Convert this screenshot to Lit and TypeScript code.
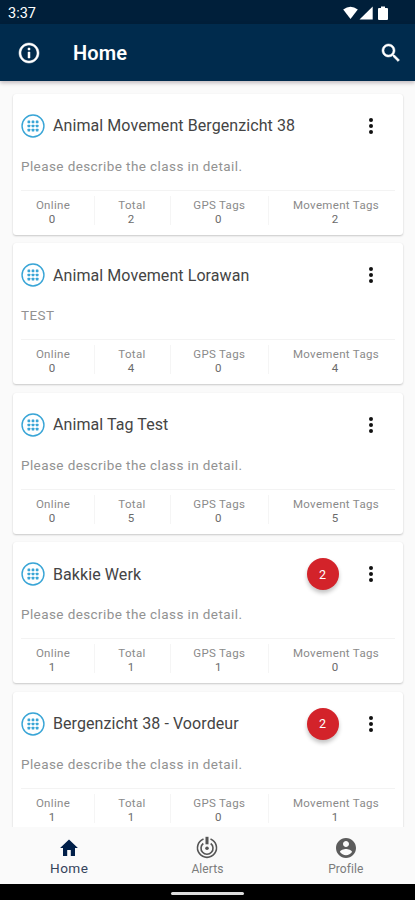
import { LitElement, html, css, svg } from "lit";
import { customElement, property } from "lit/decorators.js";

interface Group {
  name: string;
  description: string;
  stats: number[];
  alerts?: number;
}

const PLACEHOLDER = "Please describe the class in detail.";
const LABELS = ["Online", "Total", "GPS Tags", "Movement Tags"];
const GROUPS: Group[] = [
  { name: "Animal Movement Bergenzicht 38", description: PLACEHOLDER, stats: [0, 2, 0, 2] },
  { name: "Animal Movement Lorawan", description: "TEST", stats: [0, 4, 0, 4] },
  { name: "Animal Tag Test", description: PLACEHOLDER, stats: [0, 5, 0, 5] },
  { name: "Bakkie Werk", description: PLACEHOLDER, stats: [1, 1, 1, 0], alerts: 2 },
  { name: "Bergenzicht 38 - Voordeur", description: PLACEHOLDER, stats: [1, 1, 0, 1], alerts: 2 },
];

@customElement("group-card")
class GroupCard extends LitElement {
  @property({ attribute: false }) group!: Group;

  static styles = css`
    :host {
      display: flex;
      flex-direction: column;
      box-sizing: border-box;
      height: 141px;
      background: #fff;
      border-radius: 3px;
      box-shadow: 0 1px 2px rgba(0, 0, 0, 0.2), 0 0 1px rgba(0, 0, 0, 0.05);
    }
    .head {
      display: flex;
      align-items: center;
      height: 64px;
      padding: 0 20px 0 8px;
    }
    .globe { width: 24px; height: 24px; flex: none; }
    .name {
      flex: 1;
      margin-left: 8.5px;
      font-size: 16px;
      letter-spacing: 0.08px;
      color: #444;
      white-space: nowrap;
    }
    .badge {
      display: flex;
      align-items: center;
      justify-content: center;
      width: 32px;
      height: 32px;
      border-radius: 50%;
      background: #d3232a;
      color: #fff;
      font-size: 12.5px;
      margin-right: 20.5px;
      box-shadow: 0 3px 4px rgba(0, 0, 0, 0.24);
    }
    .more { width: 24px; height: 24px; flex: none; }
    .desc {
      height: 32px;
      padding-left: 8.5px;
      line-height: 17px;
      font-size: 13.5px;
      letter-spacing: 0.41px;
      color: #929292;
    }
    .stats {
      display: grid;
      grid-template-columns: 82px 76px 98.5px 1fr;
      height: 44px;
      text-align: center;
      font-size: 11.5px;
      line-height: 14px;
      color: #8a8a8a;
    }
    .rule { height: 1px; margin: 0 8.5px; background: #f3f3f3; }
    .stat {
      height: 27px;
      margin-top: 5px;
      padding-top: 2px;
      letter-spacing: 0.32px;
      border-right: 1px solid #f5f5f5;
    }
    .stat:last-child { border-right: 0; }
    .value { color: #6a6a6a; letter-spacing: 0; margin-right: 2px; }
  `;

  render() {
    const g = this.group;
    const dots = [8.2, 12.5, 16.8].flatMap((y) =>
      [8.2, 12.5, 16.8].map((x) => svg`<rect x=${x - 1.4} y=${y - 1.4} width="2.8" height="2.8" rx=".5"/>`)
    );
    return html`
      <div class="head">
        <svg class="globe" viewBox="0 0 25 25" fill="#39a5d6">
          <circle cx="12.5" cy="12.5" r="11.4" fill="none" stroke="#39a5d6" stroke-width="1.5" />
          ${dots}
        </svg>
        <span class="name">${g.name}</span>
        ${g.alerts ? html`<span class="badge">${g.alerts}</span>` : null}
        <svg class="more" viewBox="0 0 24 24" fill="#111">
          <circle cx="12" cy="6.1" r="2" /><circle cx="12" cy="12" r="2" /><circle cx="12" cy="17.9" r="2" />
        </svg>
      </div>
      <div class="desc">${g.description}</div>
      <div class="rule"></div>
      <div class="stats">
        ${LABELS.map(
          (label, i) => html`<div class="stat"><div>${label}</div><div class="value">${g.stats[i]}</div></div>`
        )}
      </div>
    `;
  }
}

@customElement("app-root")
class AppRoot extends LitElement {
  static styles = css`
    :host {
      display: flex;
      flex-direction: column;
      width: 415px;
      height: 900px;
      overflow: hidden;
      background: #fafafa;
      font-family: Roboto, "Liberation Sans", sans-serif;
    }
    .status {
      display: flex;
      align-items: center;
      justify-content: space-between;
      height: 24px;
      box-sizing: border-box;
      padding: 2px 26px 0 8px;
      background: #001f3a;
      color: #fff;
      font-size: 14.5px;
      flex: none;
    }
    .signals { width: 46px; height: 16px; }
    .bar {
      display: flex;
      align-items: center;
      height: 57px;
      padding: 0 12px 0 17px;
      background: #002b4d;
      color: #fff;
      flex: none;
      z-index: 1;
      box-shadow: 0 2px 4px rgba(30, 0, 20, 0.25);
    }
    .icon { width: 24px; height: 24px; }
    .title {
      flex: 1;
      margin: 1px 0 0 32px;
      font-size: 20px;
      font-weight: 600;
      letter-spacing: 0.1px;
    }
    .list {
      flex: 1;
      min-height: 0;
      overflow: hidden;
      display: flex;
      flex-direction: column;
      gap: 8.5px;
      padding: 12.7px 12px 0 12.5px;
    }
    group-card { flex: none; }
    .nav {
      display: grid;
      grid-template-columns: repeat(3, 1fr);
      height: 57px;
      flex: none;
      background: #fafafa;
      color: #7c7c7c;
      font-size: 12px;
      letter-spacing: 0.08px;
    }
    .tab {
      display: flex;
      flex-direction: column;
      align-items: center;
      padding-top: 9px;
    }
    .tab span { line-height: 14px; margin-top: 2px; }
    .tab.active { color: #34435a; font-size: 13.6px; letter-spacing: 0.4px; }
    .tab.active span { margin-top: 1px; }
    .system {
      display: flex;
      justify-content: center;
      box-sizing: border-box;
      height: 16px;
      padding-top: 8px;
      background: #000;
      flex: none;
    }
    .handle { width: 73px; height: 3px; border-radius: 2px; background: #ddd; }
  `;

  render() {
    return html`
      <div class="status">
        <span>3:37</span>
        <svg class="signals" viewBox="0 0 46 16" fill="#fff">
          <path d="M0.2 4.6Q7.5-1 14.8 4.6L7.5 14Z" />
          <path d="M16.5 14.6L29.7 1.5V14.6Z" />
          <path d="M36 3H38V1.5H42V3H44Q45 3 45 4V14Q45 15 44 15H36Q35 15 35 14V4Q35 3 36 3Z" />
        </svg>
      </div>
      <div class="bar">
        <svg class="icon" viewBox="0 0 24 24" fill="#fff">
          <path d="M11 7h2v2h-2zm0 4h2v6h-2zm1-9C6.5 2 2 6.5 2 12s4.5 10 10 10 10-4.5 10-10S17.5 2 12 2zm0 18c-4.4 0-8-3.6-8-8s3.6-8 8-8 8 3.6 8 8-3.6 8-8 8z" stroke="#fff" stroke-width=".5" />
        </svg>
        <span class="title">Home</span>
        <svg class="icon" viewBox="0 0 24 24" fill="#fff">
          <path d="M15.5 14h-.79l-.28-.27A6.5 6.5 0 1 0 13.73 14.43l.27.28v.79l5 4.99L20.49 19zM9.5 14a4.5 4.5 0 1 1 0-9 4.5 4.5 0 0 1 0 9z" stroke="#fff" stroke-width=".5" />
        </svg>
      </div>
      <div class="list">${GROUPS.map((g) => html`<group-card .group=${g}></group-card>`)}</div>
      <div class="nav">
        <div class="tab active">
          <svg class="icon" viewBox="0 0 24 24" fill="#001f49">
            <path d="M10.2 20v-6h3.6v6H18v-8h2.9L12 3.5 3.1 12H6v8z" />
          </svg>
          <span>Home</span>
        </div>
        <div class="tab">
          <svg class="icon" viewBox="0 0 24 24" fill="none" stroke="#555" stroke-width="1.6">
            <path d="M8.5 3A9.5 9.5 0 1 0 15.5 3" />
            <path d="M8.3 7.5A6 6 0 1 0 15.7 7.5" />
            <path d="M12 .8v7.5" stroke-width="3" />
            <circle cx="12" cy="12.3" r="1.8" fill="#555" stroke="none" />
          </svg>
          <span>Alerts</span>
        </div>
        <div class="tab">
          <svg class="icon" viewBox="0 0 24 24" fill="#5c5c5c">
            <path d="M12 2C6.48 2 2 6.48 2 12s4.48 10 10 10 10-4.48 10-10S17.52 2 12 2zm0 3c1.66 0 3 1.34 3 3s-1.34 3-3 3-3-1.34-3-3 1.34-3 3-3zm0 14.2c-2.5 0-4.71-1.28-6-3.22.03-1.99 4-3.08 6-3.08 1.99 0 5.97 1.09 6 3.08-1.29 1.94-3.5 3.22-6 3.22z" />
          </svg>
          <span>Profile</span>
        </div>
      </div>
      <div class="system"><div class="handle"></div></div>
    `;
  }
}
